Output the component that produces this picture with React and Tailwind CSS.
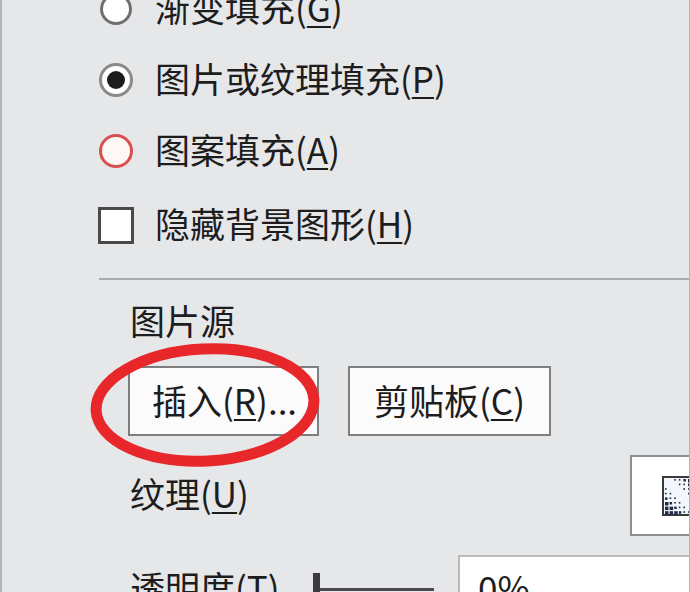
const Radio = ({ state }) => {
  if (state === "checked") {
    return (
      <span className="flex h-[34px] w-[34px] items-center justify-center rounded-full border-[3px] border-[#8a8a8a] bg-white">
        <span className="h-[18px] w-[18px] rounded-full bg-[#1c1c1c]" />
      </span>
    )
  }
  if (state === "red") {
    return <span className="block h-[34px] w-[34px] rounded-full border-[3px] border-[#d9504e] bg-[#fdf7f6]" />
  }
  return <span className="block h-[32px] w-[32px] rounded-full border-[3px] border-[#6e6e70] bg-white" />
}

const Key = ({ children }) => <span className="underline decoration-2 underline-offset-[4px]">{children}</span>

const Swatch = () => {
  const dots = []
  for (let r = 0; r < 8; r++) {
    for (let c = 0; c < 6; c++) {
      const d = Math.abs(r - c)
      if (d < 2) continue
      const s = d > 4 ? 3.5 : d > 3 ? 2.5 : 1.6
      dots.push(<rect key={r + "-" + c} x={3 + c * 4.6} y={3 + r * 4.6} width={s} height={s} fill="#1f2a44" />)
    }
  }
  return (
    <svg width="30" height="40" viewBox="0 0 30 40" className="block">
      <rect x="1" y="1" width="40" height="38" fill="#f4f7fb" stroke="#3a3a3a" strokeWidth="2" />
      {dots}
    </svg>
  )
}

const App = () => {
  return (
    <div className="relative h-[592px] w-[690px] overflow-hidden border-l-2 border-r border-[#b3b4b6] bg-[#e6e7e9] font-['Noto_Sans_CJK_SC','Noto_Sans',sans-serif] text-[35px] leading-none text-[#1d1d1d]">
      <div className="mt-[-9px] flex flex-col pl-[96px]">
        <div className="flex h-[36px] items-center gap-[21px]">
          <span className="flex w-[36px] justify-center"><Radio state="off" /></span>
          <span className="pb-[6px]">渐变填充(<Key>G</Key>)</span>
        </div>
        <div className="mt-[35px] flex h-[36px] items-center gap-[21px]">
          <span className="flex w-[36px] justify-center"><Radio state="checked" /></span>
          <span className="pb-[6px]">图片或纹理填充(<Key>P</Key>)</span>
        </div>
        <div className="mt-[35px] flex h-[36px] items-center gap-[21px]">
          <span className="flex w-[36px] justify-center"><Radio state="red" /></span>
          <span className="pb-[6px]">图案填充(<Key>A</Key>)</span>
        </div>
        <div className="mt-[38px] flex h-[36px] items-center gap-[21px]">
          <span className="flex w-[36px] justify-center">
            <span className="block h-[37px] w-[37px] border-[3px] border-[#4a4a4c] bg-white" />
          </span>
          <span className="pb-[6px]">隐藏背景图形(<Key>H</Key>)</span>
        </div>
      </div>

      <div className="ml-[97px] mt-[35px] border-t-2 border-[#a9aaac]" />

      <div className="flex flex-col pl-[128px]">
        <div className="mt-[22px] h-[38px]">图片源</div>

        <div className="ml-[-2px] mt-[26px] flex gap-[29px]">
          <button className="flex h-[70px] w-[191px] items-center border-2 border-[#7d7e80] bg-[#fbfbfc] pb-[4px] pl-[22px]">
            插入(<Key>R</Key>)...
          </button>
          <button className="flex h-[70px] w-[203px] items-center justify-center border-2 border-[#7d7e80] bg-[#fbfbfc] pb-[4px]">
            剪贴板(<Key>C</Key>)
          </button>
        </div>

        <div className="mt-[19px] flex items-center">
          <span className="w-[500px] shrink-0 pb-[6px]">纹理(<Key>U</Key>)</span>
          <div className="flex h-[81px] w-[100px] shrink-0 items-center border-2 border-[#8d8e90] bg-white pl-[30px]">
            <Swatch />
          </div>
        </div>

        <div className="mt-[19px] flex items-start">
          <span className="mt-[14px] w-[183px] shrink-0">透明度(<Key>T</Key>)</span>
          <div className="mt-[18px] flex w-[145px] shrink-0 items-end">
            <span className="h-[30px] w-[7px] bg-[#3c3c3e]" />
            <span className="mb-[12px] h-[3px] w-[114px] bg-[#4a4a4c]" />
          </div>
          <div className="h-[60px] w-[260px] shrink-0 border-2 border-[#b9babc] bg-white pl-[18px] pt-[12px]">0%</div>
        </div>
      </div>

      <svg className="pointer-events-none absolute left-0 top-0" width="690" height="592">
        <ellipse cx="203" cy="405" rx="109" ry="56" fill="none" stroke="#e8272b" strokeWidth="11" transform="rotate(-3 203 405)" />
      </svg>
    </div>
  )
}

export default App
